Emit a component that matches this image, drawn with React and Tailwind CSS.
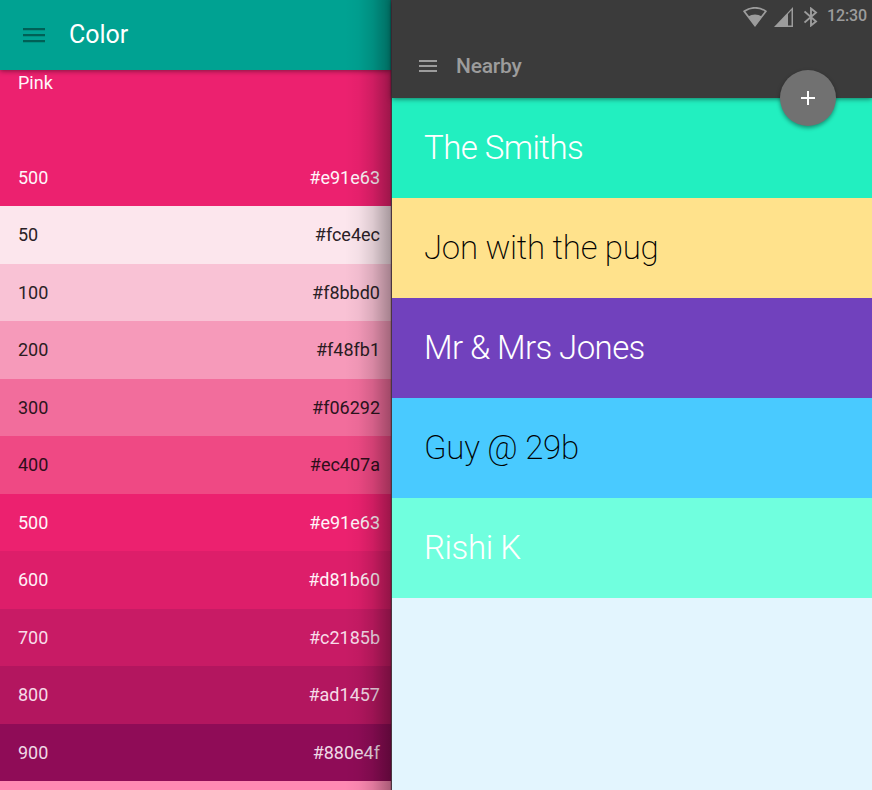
const swatches = [
  { name: '50', hex: '#fce4ec', style: 'h-[58px] bg-[#fce6ed] text-[#2a2126]' },
  { name: '100', hex: '#f8bbd0', style: 'h-[57px] bg-[#f9c2d5] text-[#2a2126]' },
  { name: '200', hex: '#f48fb1', style: 'h-[58px] bg-[#f69aba] text-[#2a1c22]' },
  { name: '300', hex: '#f06292', style: 'h-[57px] bg-[#f26d9c] text-[#2c141d]' },
  { name: '400', hex: '#ec407a', style: 'h-[58px] bg-[#ef4984] text-[#2e0e1a]' },
  { name: '500', hex: '#e91e63', style: 'h-[57px] bg-[#ec216f] text-[#fff5f9]' },
  { name: '600', hex: '#d81b60', style: 'h-[58px] bg-[#dd1e6a] text-[#fff0f6]' },
  { name: '700', hex: '#c2185b', style: 'h-[57px] bg-[#c81b65] text-[#f8dde9]' },
  { name: '800', hex: '#ad1457', style: 'h-[58px] bg-[#b3165f] text-[#f6dbe8]' },
  { name: '900', hex: '#880e4f', style: 'h-[57px] bg-[#8f0c57] text-[#f0d9e6]' },
];

const people = [
  { name: 'The Smiths', style: 'bg-[#22efc0] text-white font-light tracking-[-0.55px]' },
  { name: 'Jon with the pug', style: 'bg-[#ffe28c] text-black font-extralight tracking-[-0.27px]' },
  { name: 'Mr & Mrs Jones', style: 'bg-[#7141bd] text-white font-light tracking-[-0.6px]' },
  { name: 'Guy @ 29b', style: 'bg-[#49caff] text-black font-extralight tracking-[-0.27px]' },
  { name: 'Rishi K', style: 'bg-[#70ffde] text-white font-light tracking-[-0.4px]' },
];

function StatusBar() {
  return (
    <div className="flex h-[34px] items-start pt-[7px] pl-[351px] text-[#9c9c9c]">
      <svg className="h-5 w-6 shrink-0" viewBox="0 0 24 20" fill="none">
        <path d="M1.2 4.3C7.5-.4 16.500-.4 22.800 4.300L12 18.500Z" stroke="currentColor" strokeWidth="1.7" />
        <path d="M5 9.500Q12 5.500 19 9.500L12 19Z" fill="currentColor" />
      </svg>
      <svg className="ml-[7px] h-5 w-[19px] shrink-0" viewBox="0 0 19 20" fill="none">
        <path d="M0 20L19 0V20Z" fill="currentColor" />
        <path d="M14 7L17.500 3.300V18.500H14Z" fill="#3b3b3b" />
      </svg>
      <svg className="ml-[11px] h-5 w-[14px] shrink-0" viewBox="0 0 14 20" fill="none" stroke="currentColor" strokeWidth="1.9">
        <path d="M.5 4.500L12 14.500L7 18.500V1.500L12 5.500L.5 15.500" />
      </svg>
      <span className="ml-[9px] text-[16px] leading-[18px] font-medium tracking-[-0.1px]">12:30</span>
    </div>
  );
}

function ColorPanel() {
  return (
    <section className="relative h-full w-[391px] shrink-0 overflow-hidden bg-[#ff8ab3]">
      <header className="relative flex h-[70px] items-center bg-[#00a292] pl-[23px] shadow-[0_1px_5px_rgba(0,0,0,0.45)]">
        <svg className="h-4 w-[22px]" viewBox="0 0 22 16" fill="#006056">
          <path d="M0 1h22v2.300H0zM0 7h22v2.300H0zM0 13h22v2.300H0z" />
        </svg>
        <h1 className="ml-6 text-[25px] leading-[30px] text-white">Color</h1>
      </header>
      <div className="flex h-[136px] flex-col justify-between bg-[#ec216f] pt-[2px] pr-[11px] pb-[17px] pl-[18px] text-[18px] leading-[22px] text-[#fff5f9]">
        <span>Pink</span>
        <div className="flex justify-between">
          <span>500</span>
          <span>#e91e63</span>
        </div>
      </div>
      {swatches.map((s) => (
        <div key={s.name} className={`flex items-center justify-between pr-[11px] pl-[18px] text-[18px] leading-[22px] ${s.style}`}>
          <span>{s.name}</span>
          <span>{s.hex}</span>
        </div>
      ))}
      <div className="absolute inset-y-0 right-0 w-[46px] bg-[linear-gradient(to_right,transparent,rgba(0,0,0,0.03)_30%,rgba(0,0,0,0.12)_60%,rgba(0,0,0,0.32)_97%,rgba(0,0,0,0.45))]" />
    </section>
  );
}

function NearbyPanel() {
  return (
    <section className="relative ml-px h-full w-[480px] bg-[#e3f5fe]">
      <header className="relative h-[98px] bg-[#3b3b3b] shadow-[0_1px_5px_rgba(0,0,0,0.5)]">
        <StatusBar />
        <div className="flex h-16 items-center pl-[27px] text-[#9c9c9c]">
          <svg className="h-3 w-[18px]" viewBox="0 0 18 12" fill="currentColor">
            <path d="M0 0h18v2H0zM0 5h18v2H0zM0 10h18v2H0z" />
          </svg>
          <h2 className="ml-[19px] text-[21px] leading-6 font-medium tracking-[-0.2px]">Nearby</h2>
        </div>
      </header>
      <button className="absolute top-[70px] left-[388px] flex h-14 w-14 items-center justify-center rounded-full bg-[#717171] shadow-[0_2px_4px_rgba(0,0,0,0.4)]">
        <svg className="h-[14px] w-[14px]" viewBox="0 0 14 14" fill="white">
          <path d="M6 0h2v6h6v2H8v6H6V8H0V6h6z" />
        </svg>
      </button>
      {people.map((p) => (
        <div key={p.name} className={`flex h-[100px] items-center pl-8 text-[33px] leading-10 ${p.style}`}>
          {p.name}
        </div>
      ))}
    </section>
  );
}

export default function App() {
  return (
    <main className="flex h-[790px] w-[872px] overflow-hidden bg-[#4b3540] font-[Roboto,sans-serif]">
      <ColorPanel />
      <NearbyPanel />
    </main>
  );
}
